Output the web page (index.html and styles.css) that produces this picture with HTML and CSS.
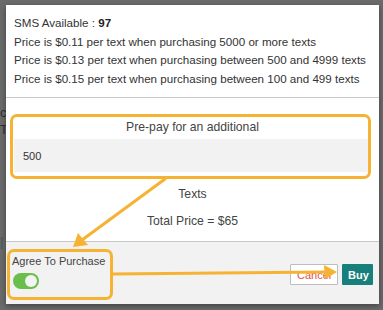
FILE: index.html
```html
<!DOCTYPE html>
<html lang="en">
<head>
    <meta charset="UTF-8">
    <title>Purchase SMS</title>
    <link rel="stylesheet" href="styles.css">
</head>
<body>
    <div class="page">
        <div class="page-row r1">c</div>
        <div class="page-row r2">T</div>
        <div class="page-row r3">|</div>
    </div>

    <div class="modal">
        <div class="modal-body">
            <p>SMS Available : <strong>97</strong></p>
            <p>Price is $0.11 per text when purchasing 5000 or more texts</p>
            <p>Price is $0.13 per text when purchasing between 500 and 4999 texts</p>
            <p>Price is $0.15 per text when purchasing between 100 and 499 texts</p>
        </div>
        <div class="modal-purchase">
            <label class="prepay-label" for="qty">Pre-pay for an additional</label>
            <input class="prepay-input" id="qty" type="text" value="500">
            <div class="center-text texts">Texts</div>
            <div class="center-text total">Total Price = $65</div>
        </div>
        <div class="modal-footer">
            <div class="agree">
                <div class="agree-label">Agree To Purchase</div>
                <span class="toggle"><span class="knob"></span></span>
            </div>
            <div class="actions">
                <button class="btn btn-cancel">Cancel</button>
                <button class="btn btn-buy">Buy</button>
            </div>
        </div>
    </div>

    <!-- annotation overlay -->
    <div class="mark mark-input"></div>
    <div class="mark mark-agree"></div>
    <svg class="arrows" width="383" height="310" viewBox="0 0 383 310">
        <g stroke="#f6b333" stroke-width="3" fill="none" stroke-linecap="round">
            <line x1="165" y1="179" x2="82" y2="240"/>
            <line x1="112" y1="274" x2="326" y2="272"/>
        </g>
        <g fill="#f6b333">
            <polygon points="73,247 78,233 88,245"/>
            <polygon points="337,272 324,265 325,279"/>
        </g>
    </svg>
</body>
</html>
```

FILE: styles.css
```css
body {
    margin: 0;
    width: 383px;
    height: 310px;
    overflow: hidden;
    background: #6b6b6b;
    font-family: "Liberation Sans", Arial, sans-serif;
    font-size: 11px;
    color: #333;
    position: relative;
}
.page {
    padding-top: 105px;
    color: #2f2f2f;
    font-size: 13px;
}
.page-row {
    height: 17px;
}
.page-row.r3 {
    margin-top: 95px;
    color: #3c5a58;
}
.modal {
    position: absolute;
    left: 6px;
    top: 5px;
    width: 373px;
    height: 299px;
    background: #fff;
    box-shadow: 0 2px 6px rgba(0,0,0,0.4);
    display: flex;
    flex-direction: column;
}
.modal-body {
    padding: 9px 8px 0 8px;
    height: 83px;
    border-bottom: 1px solid #c8c8c8;
}
.modal-body p {
    margin: 0;
    line-height: 18.7px;
    font-size: 11.6px;
}
.modal-body strong {
    color: #222;
}
.modal-purchase {
    padding: 21px 8px 0 8px;
    flex: 1;
}
.prepay-label {
    display: block;
    text-align: center;
    font-size: 12.2px;
    color: #444;
    height: 20px;
    line-height: 16px;
}
.prepay-input {
    display: block;
    width: 100%;
    box-sizing: border-box;
    height: 33px;
    border: none;
    background: #f2f2f2;
    padding: 0 9px;
    font-family: "Liberation Sans", Arial, sans-serif;
    font-size: 11px;
    color: #333;
}
.center-text {
    text-align: center;
    font-size: 12.2px;
    color: #444;
}
.texts {
    margin-top: 15px;
}
.total {
    margin-top: 13px;
}
.modal-footer {
    height: 62px;
    background: #f2f2f2;
    border-top: 1px solid #c8c8c8;
    display: flex;
    justify-content: space-between;
    padding: 0 6px 0 6px;
}
.agree {
    padding-top: 13px;
}
.agree-label {
    font-size: 11px;
    color: #444;
}
.toggle {
    display: block;
    margin-top: 6px;
    margin-left: 1px;
    width: 26px;
    height: 16px;
    border-radius: 8px;
    background: #6abf4c;
    position: relative;
}
.knob {
    position: absolute;
    right: 2px;
    top: 2px;
    width: 12px;
    height: 12px;
    border-radius: 50%;
    background: #f4f4f4;
}
.actions {
    display: flex;
    gap: 4px;
    padding-top: 22px;
}
.btn {
    height: 21px;
    font-family: "Liberation Sans", Arial, sans-serif;
    font-size: 11px;
    padding: 0 6px;
    border-radius: 1px;
}
.btn-cancel {
    width: 48px;
    background: #fff;
    border: 1px solid #bdbdbd;
    color: #e0524a;
}
.btn-buy {
    width: 31px;
    background: #17807d;
    border: none;
    color: #fff;
    font-weight: bold;
}
.mark {
    position: absolute;
    border: 3px solid #f6b333;
    border-radius: 7px;
}
.mark-input {
    left: 10px;
    top: 114px;
    width: 355px;
    height: 59px;
}
.mark-agree {
    left: 7px;
    top: 249px;
    width: 100px;
    height: 45px;
}
.arrows {
    position: absolute;
    left: 0;
    top: 0;
}
```
